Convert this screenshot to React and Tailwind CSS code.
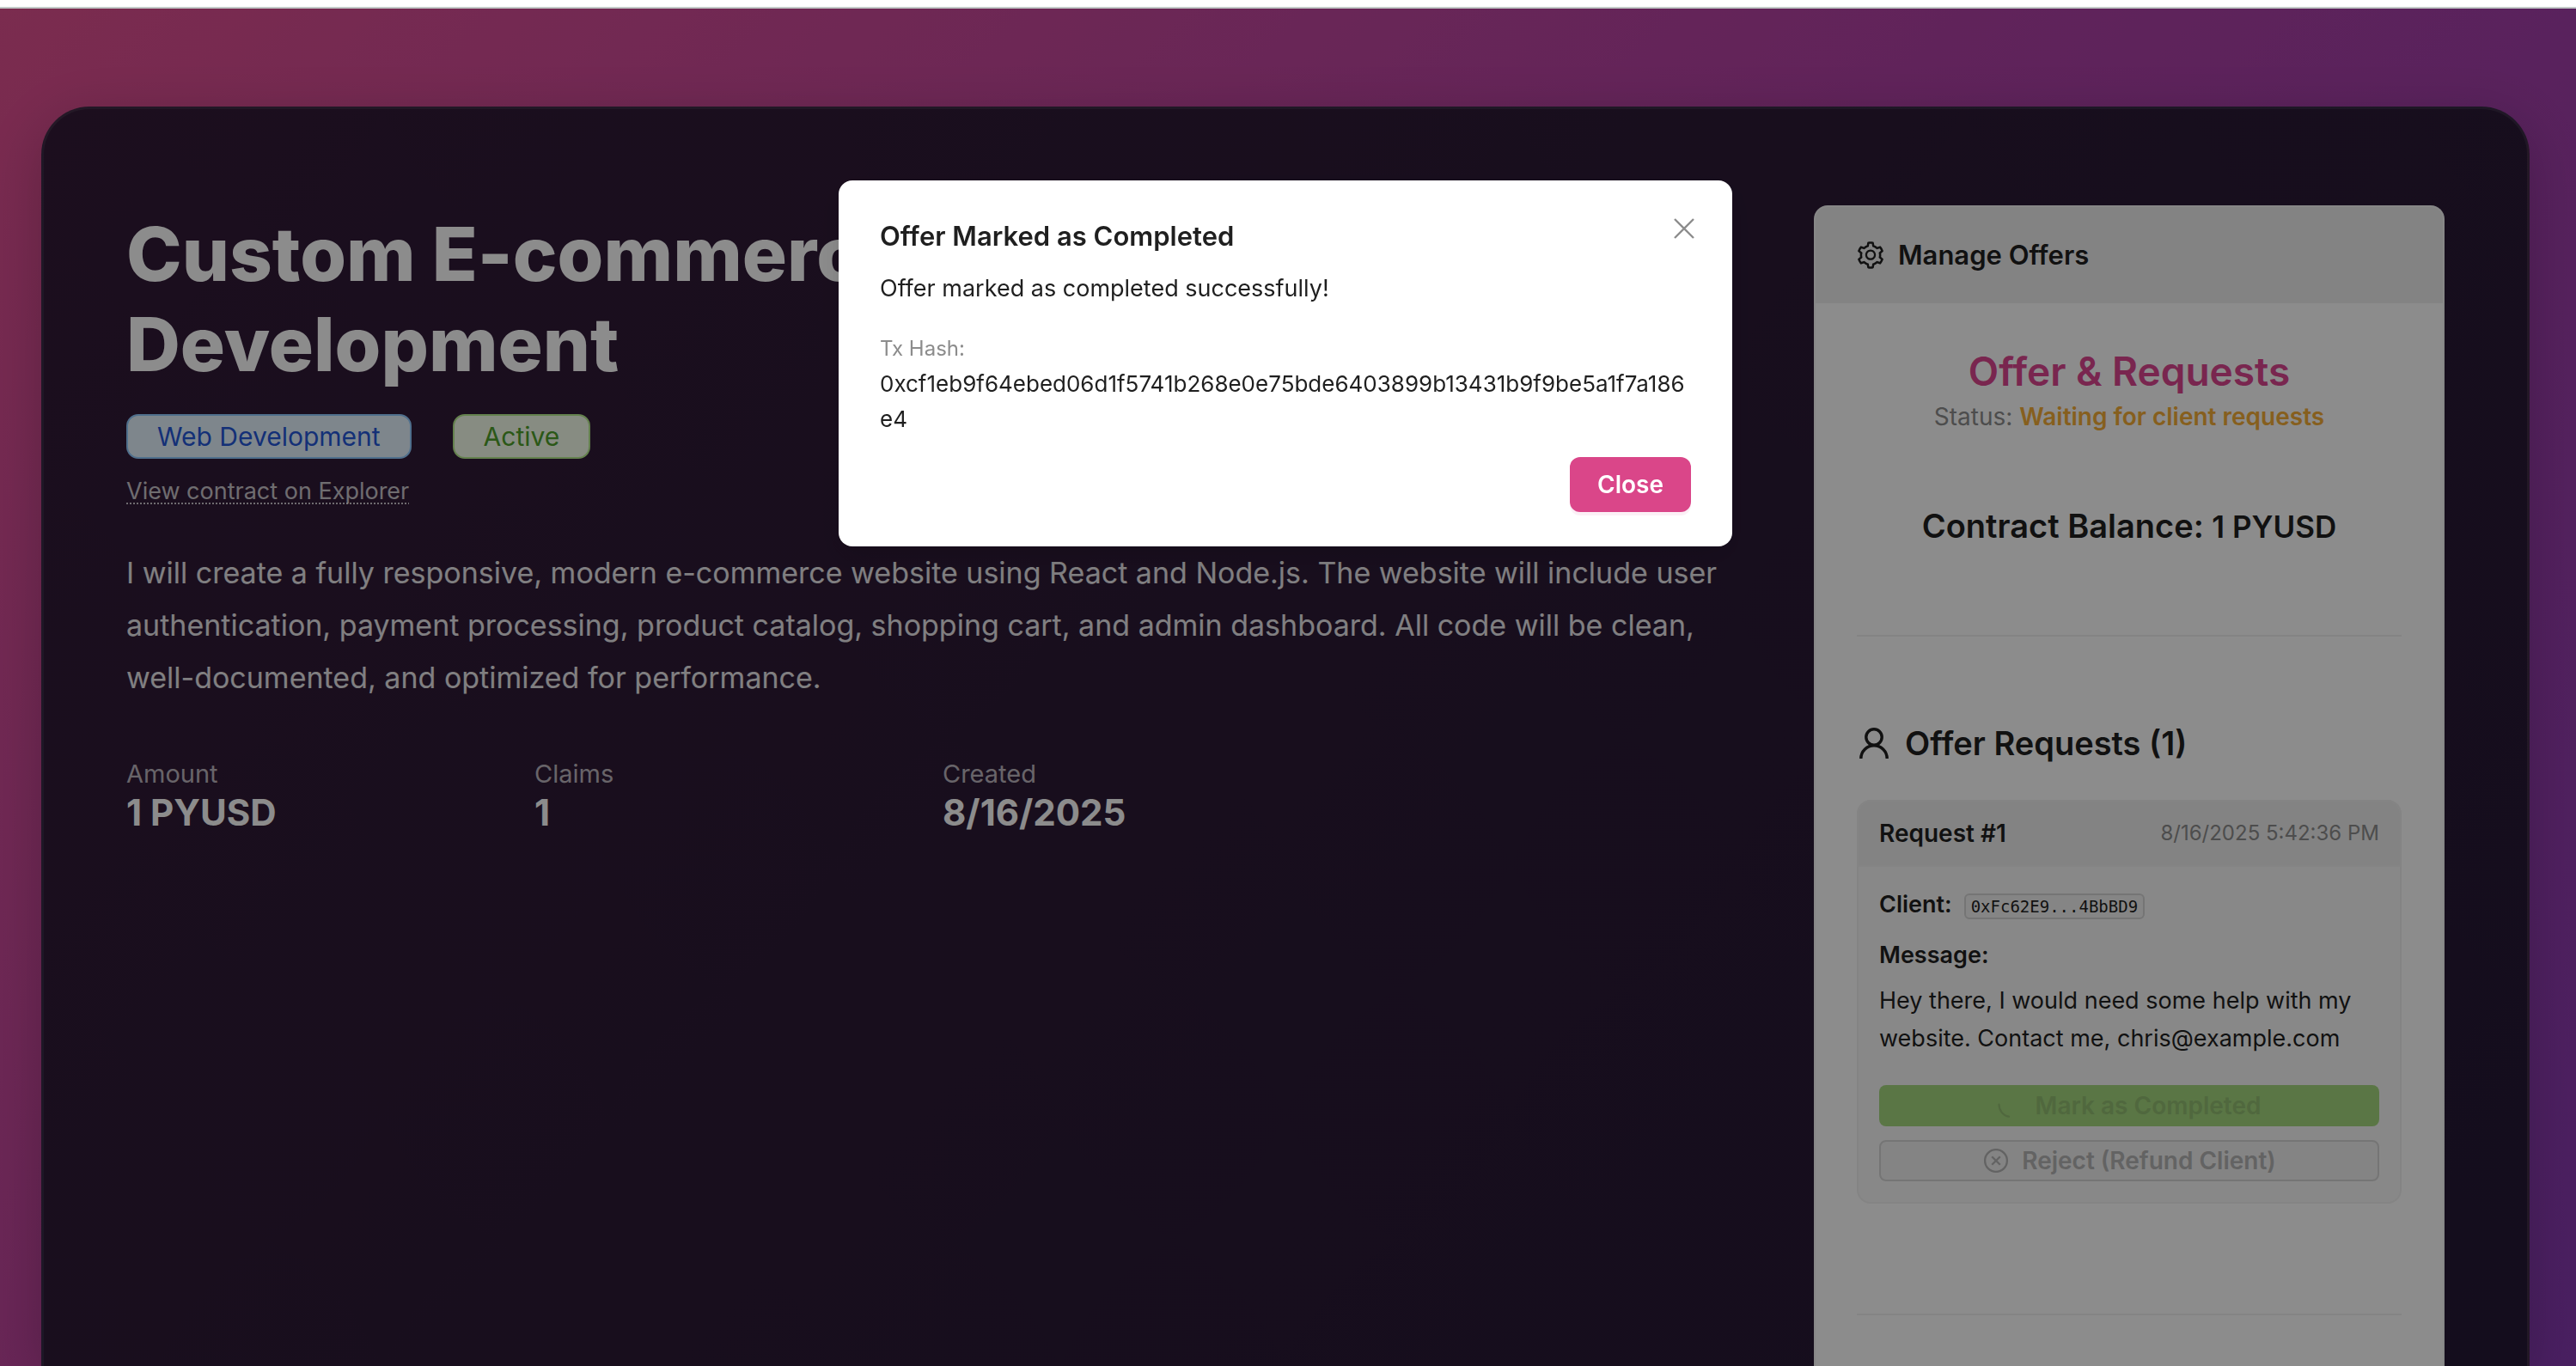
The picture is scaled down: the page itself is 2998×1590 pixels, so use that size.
import { AiOutlineSetting } from "react-icons/ai";

const stats = [
  { label: "Amount", value: "1 PYUSD" },
  { label: "Claims", value: "1" },
  { label: "Created", value: "8/16/2025" },
];

function UserIcon() {
  return (
    <svg viewBox="0 0 40 40" className="size-10 shrink-0" fill="none" stroke="currentColor" strokeWidth="3.4" aria-hidden="true">
      <circle cx="20" cy="13" r="9.2" />
      <path d="M4.8 38a15.2 15.2 0 0 1 30.4 0" />
    </svg>
  );
}

function SpinnerIcon() {
  return (
    <svg viewBox="0 0 28 28" className="size-7 shrink-0" fill="none" stroke="currentColor" strokeWidth="2.2" strokeLinecap="round" aria-hidden="true">
      <path d="M1.5 12.5C1.5 19.5 6 25.5 13 26.7" />
    </svg>
  );
}

function CloseCircleIcon() {
  return (
    <svg viewBox="0 0 32 32" className="size-8 shrink-0" fill="none" stroke="currentColor" strokeWidth="2.3" aria-hidden="true">
      <circle cx="16" cy="16" r="12.9" />
      <path d="M11.2 11.2l9.6 9.6M20.8 11.2l-9.6 9.6" />
    </svg>
  );
}

function OfferDetails() {
  return (
    <section className="min-w-0 flex-1 pt-1 text-white">
      <h1 className="text-[87px] leading-[105px] font-extrabold">
        Custom E-commerce Website
        <br />
        Development
      </h1>
      <div className="mt-[29px] flex gap-12 text-[30px] leading-[48px]">
        <span className="rounded-[14px] border-2 border-[#91caff] bg-[#e6f4ff] px-[34px] text-[#2558d9]">Web Development</span>
        <span className="rounded-[14px] border-2 border-[#b7eb8f] bg-[#f6ffed] px-[34px] text-[#4fa02a]">Active</span>
      </div>
      <div className="mt-4 text-[27px] leading-[44px]">
        <a
          href="#explorer"
          className="text-white/75 underline decoration-dotted decoration-2 underline-offset-4 [text-decoration-skip-ink:none]"
        >
          View contract on Explorer
        </a>
      </div>
      <p className="mt-[42px] text-[34px] leading-[61px] text-white/90">
        I will create a fully responsive, modern e-commerce website using React and Node.js. The website will include user
        authentication, payment processing, product catalog, shopping cart, and admin dashboard. All code will be clean,
        well-documented, and optimized for performance.
      </p>
      <dl className="mt-[62px] grid grid-cols-4">
        {stats.map((s) => (
          <div key={s.label}>
            <dt className="text-[29px] leading-10 text-white/70">{s.label}</dt>
            <dd className="text-[42px] leading-[50px] font-bold">{s.value}</dd>
          </div>
        ))}
      </dl>
    </section>
  );
}

function RequestCard() {
  return (
    <article className="mt-[38px] overflow-hidden rounded-2xl border-2 border-[#f0f0f0] bg-[#f8f8f8]">
      <header className="flex h-[76px] items-center justify-between border-b-2 border-[#f0f0f0] bg-[#efefef] px-6">
        <h4 className="text-[28px] font-semibold">Request #1</h4>
        <time className="text-[24px] text-[#8c8c8c]">8/16/2025 5:42:36 PM</time>
      </header>
      <div className="p-6 text-[27px]">
        <div className="flex items-baseline gap-[14px] leading-10">
          <strong className="font-semibold">Client:</strong>
          <code className="rounded-md border-2 border-[#d5d5d5] bg-[#f3f3f3] px-[6px] font-['DejaVu_Sans_Mono',monospace] text-[19px] leading-[26px]">
            0xFc62E9...4BbBD9
          </code>
        </div>
        <p className="mt-4 leading-[46px] font-semibold">Message:</p>
        <p className="mt-2 leading-[44px]">Hey there, I would need some help with my website. Contact me, chris@example.com</p>
        <div className="mt-8 flex flex-col gap-4 text-[28px] font-semibold">
          <button type="button" disabled className="flex h-12 items-center justify-center gap-4 rounded-lg bg-[#a4d77f] text-[#93bd72]">
            <SpinnerIcon />
            Mark as Completed
          </button>
          <button
            type="button"
            disabled
            className="flex h-12 items-center justify-center gap-[14px] rounded-lg border-2 border-[#d5d5d5] bg-[#f0f0f0] text-[#b4b4b4]"
          >
            <CloseCircleIcon />
            Reject (Refund Client)
          </button>
        </div>
      </div>
    </article>
  );
}

function ManageOffers() {
  return (
    <aside className="w-[734px] shrink-0 overflow-hidden rounded-t-2xl border-2 border-b-0 border-[#f6f6f6] bg-white text-[#1f1f1f]">
      <header className="flex h-28 items-center gap-[14px] bg-[#efefef] pr-12 pl-[46px]">
        <AiOutlineSetting className="size-9" />
        <h2 className="text-[31px] font-semibold">Manage Offers</h2>
      </header>
      <div className="px-12 pt-12">
        <div className="text-center">
          <h3 className="text-[46px] leading-[62px] font-semibold text-[#dc4590]">Offer &amp; Requests</h3>
          <p className="text-[28px] leading-[44px] text-[#8c8c8c]">
            Status: <strong className="font-semibold text-[#f5ad38]">Waiting for client requests</strong>
          </p>
          <p className="mt-[75px] text-[38px] leading-[60px] font-semibold">
            Contract Balance: <span className="text-[35px]">1 PYUSD</span>
          </p>
        </div>
        <hr className="mt-24 border-t-2 border-[#f0f0f0]" />
        <h3 className="mt-24 flex items-center gap-4 text-[38px] leading-[56px] font-semibold">
          <UserIcon />
          Offer Requests (1)
        </h3>
        <RequestCard />
        <hr className="mt-32 border-t-2 border-[#f0f0f0]" />
      </div>
    </aside>
  );
}

function CompletedDialog() {
  return (
    <div className="fixed inset-x-0 top-[10px] bottom-0 flex items-start justify-center bg-black/45 pt-[200px] pr-[6px]">
      <div
        role="dialog"
        aria-modal="true"
        aria-labelledby="dialog-title"
        className="relative w-[1040px] rounded-2xl bg-white px-12 py-10 text-[#1f1f1f] shadow-[0_12px_32px_rgba(0,0,0,0.12)]"
      >
        <button type="button" aria-label="Close dialog" className="absolute top-[34px] right-[34px] flex size-11 items-center justify-center text-[#8c8c8c]">
          <svg viewBox="0 0 24 24" className="size-6" fill="none" stroke="currentColor" strokeWidth="2.4" aria-hidden="true">
            <path d="M1 1l22 22M23 1L1 23" />
          </svg>
        </button>
        <h2 id="dialog-title" className="text-[31px] leading-[50px] font-semibold">
          Offer Marked as Completed
        </h2>
        <p className="mt-[14px] text-[27px] leading-[44px]">Offer marked as completed successfully!</p>
        <p className="mt-7 text-[24px] leading-10 text-[#8c8c8c]">Tx Hash:</p>
        <p className="text-[26px] leading-[41px] break-all">0xcf1eb9f64ebed06d1f5741b268e0e75bde6403899b13431b9f9be5a1f7a186e4</p>
        <div className="mt-6 flex justify-end">
          <button
            type="button"
            className="h-16 rounded-xl bg-[#da4689] px-8 text-[28px] font-semibold text-white shadow-[0_4px_0_rgba(218,70,137,0.08)]"
          >
            Close
          </button>
        </div>
      </div>
    </div>
  );
}

export default function App() {
  return (
    <div className="flex h-screen flex-col overflow-hidden font-['Inter',sans-serif]">
      <div className="h-[10px] shrink-0 border-b-2 border-[#c3cac8] bg-white" />
      <main className="flex min-h-0 flex-1 bg-[linear-gradient(135deg,#e05090_0%,#b041a5_50%,#863ab2_100%)] pt-[114px] pr-[54px] pl-12">
        <div className="flex min-w-0 flex-1 gap-16 rounded-t-[56px] border-3 border-b-0 border-white/8 bg-[linear-gradient(135deg,#331b37,#251935)] px-24 pt-28 shadow-[0_16px_64px_rgba(0,0,0,0.2)]">
          <OfferDetails />
          <ManageOffers />
        </div>
      </main>
      <CompletedDialog />
    </div>
  );
}
